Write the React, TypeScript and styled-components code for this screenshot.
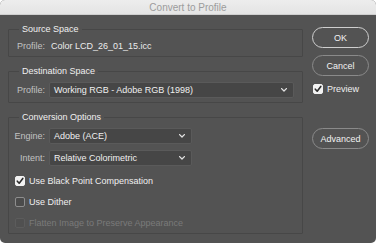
import styled, { createGlobalStyle } from 'styled-components';

const GlobalStyle = createGlobalStyle`
    html, body {
        margin: 0;
        padding: 0;
        background: #ffffff;
    }
    body {
        font-family: "Liberation Sans", Arial, sans-serif;
        -webkit-font-smoothing: antialiased;
    }
`

const Chevron = () => (
    <svg width="6" height="4" viewBox="0 0 6 4">
        <path d="M0.6 0.6 L3 3 L5.4 0.6" fill="none" stroke="#e2e2e2" strokeWidth="1.3" strokeLinecap="round" strokeLinejoin="round" />
    </svg>
)

const Check = () => (
    <svg width="8" height="8" viewBox="0 0 8 8">
        <path d="M1.3 4.2 L3.2 6.2 L6.8 1.4" fill="none" stroke="#2c2c2c" strokeWidth="1.6" strokeLinecap="round" strokeLinejoin="round" />
    </svg>
)

type BoxProps = { checked?: boolean; disabled?: boolean; label: string }

const CheckRow = ({ checked, disabled, label }: BoxProps) => (
    <CheckLine $disabled={disabled}>
        <CheckBox $checked={checked} $disabled={disabled}>
            {checked && <Check />}
        </CheckBox>
        <span>{label}</span>
    </CheckLine>
)

const App = () => {
    return (
        <>
            <GlobalStyle />
            <Window>
                <TitleBar>Convert to Profile</TitleBar>
                <Body>
                    <MainColumn>
                        <Group>
                            <Legend>Source Space</Legend>
                            <FieldRow>
                                <FieldLabel>Profile:</FieldLabel>
                                <Value>Color LCD_26_01_15.icc</Value>
                            </FieldRow>
                        </Group>

                        <Group>
                            <Legend>Destination Space</Legend>
                            <FieldRow>
                                <FieldLabel>Profile:</FieldLabel>
                                <Select $width={246}>
                                    <span>Working RGB - Adobe RGB (1998)</span>
                                    <Chevron />
                                </Select>
                            </FieldRow>
                        </Group>

                        <Group>
                            <Legend>Conversion Options</Legend>
                            <FieldRow>
                                <FieldLabel>Engine:</FieldLabel>
                                <Select $width={143}>
                                    <span>Adobe (ACE)</span>
                                    <Chevron />
                                </Select>
                            </FieldRow>
                            <FieldRow $gap={6}>
                                <FieldLabel>Intent:</FieldLabel>
                                <Select $width={143}>
                                    <span>Relative Colorimetric</span>
                                    <Chevron />
                                </Select>
                            </FieldRow>
                            <Checks>
                                <CheckRow checked label="Use Black Point Compensation" />
                                <CheckRow label="Use Dither" />
                                <CheckRow disabled label="Flatten Image to Preserve Appearance" />
                            </Checks>
                        </Group>
                    </MainColumn>

                    <SideColumn>
                        <Button $primary>OK</Button>
                        <Button>Cancel</Button>
                        <PreviewRow>
                            <CheckRow checked label="Preview" />
                        </PreviewRow>
                        <Button>Advanced</Button>
                    </SideColumn>
                </Body>
            </Window>
        </>
    )
}

export default App

const Window = styled.div`
    width: 376px;
    height: 243px;
    background: #535353;
    border-radius: 5px;
    overflow: hidden;
    display: flex;
    flex-direction: column;
`

const TitleBar = styled.div`
    height: 15px;
    line-height: 15px;
    flex: none;
    background: linear-gradient(#ededed, #e4e4e4);
    border-bottom: 1px solid #cfcfcf;
    box-sizing: border-box;
    text-align: center;
    font-size: 10px;
    color: #9c9c9c;
`

const Body = styled.div`
    display: flex;
    padding: 8px 0 0 8px;
    gap: 9px;
`

const MainColumn = styled.div`
    width: 295px;
    display: flex;
    flex-direction: column;
    gap: 8px;
`

const Group = styled.fieldset`
    margin: 0;
    padding: 0 8px 4px 0;
    min-inline-size: auto;
    border: 1px solid #474747;
    border-radius: 1px;
    display: flex;
    flex-direction: column;
`

const Legend = styled.legend`
    margin-left: 10px;
    padding: 0 3px;
    font-size: 9px;
    line-height: 12px;
    color: #f0f0f0;
`

const FieldRow = styled.div<{ $gap?: number }>`
    display: flex;
    align-items: center;
    margin-top: ${p => p.$gap ?? 5}px;
    min-height: 12px;
`

const FieldLabel = styled.div`
    width: 36px;
    text-align: right;
    font-size: 9px;
    line-height: 12px;
    color: #c2c2c2;
    flex: none;
`

const Value = styled.div`
    margin-left: 6px;
    font-size: 9px;
    line-height: 12px;
    color: #ececec;
`

const Select = styled.div<{ $width: number }>`
    width: ${p => p.$width}px;
    height: 16px;
    box-sizing: border-box;
    margin-left: 4px;
    padding: 0 6px 0 4px;
    display: flex;
    align-items: center;
    justify-content: space-between;
    background: #464646;
    border: 1px solid #5a5a5a;
    border-radius: 2px;
    font-size: 9px;
    color: #f0f0f0;
`

const Checks = styled.div`
    display: flex;
    flex-direction: column;
    gap: 9px;
    margin-top: 9px;
    padding-left: 6px;
`

const CheckLine = styled.div<{ $disabled?: boolean }>`
    display: flex;
    align-items: center;
    gap: 4px;
    height: 12px;
    font-size: 9px;
    color: ${p => (p.$disabled ? '#7a7a7a' : '#f0f0f0')};
`

const CheckBox = styled.div<{ $checked?: boolean; $disabled?: boolean }>`
    width: 10px;
    height: 10px;
    box-sizing: border-box;
    border-radius: 2px;
    display: flex;
    align-items: center;
    justify-content: center;
    background: ${p => (p.$checked ? '#f2f2f2' : p.$disabled ? '#505050' : '#4b4b4b')};
    border: 1px solid ${p => (p.$checked ? '#f2f2f2' : p.$disabled ? '#5c5c5c' : '#8e8e8e')};
`

const SideColumn = styled.div`
    width: 57px;
    display: flex;
    flex-direction: column;
    padding-top: 4px;
    gap: 7px;
`

const Button = styled.div<{ $primary?: boolean }>`
    height: 21px;
    box-sizing: border-box;
    border-radius: 11px;
    border: ${p => (p.$primary ? '1.5px solid #cfcfcf' : '1px solid #8a8a8a')};
    display: flex;
    align-items: center;
    justify-content: center;
    font-size: 9px;
    color: #f2f2f2;
`

const PreviewRow = styled.div`
    padding-left: 1px;
    margin-bottom: 26px;
`
